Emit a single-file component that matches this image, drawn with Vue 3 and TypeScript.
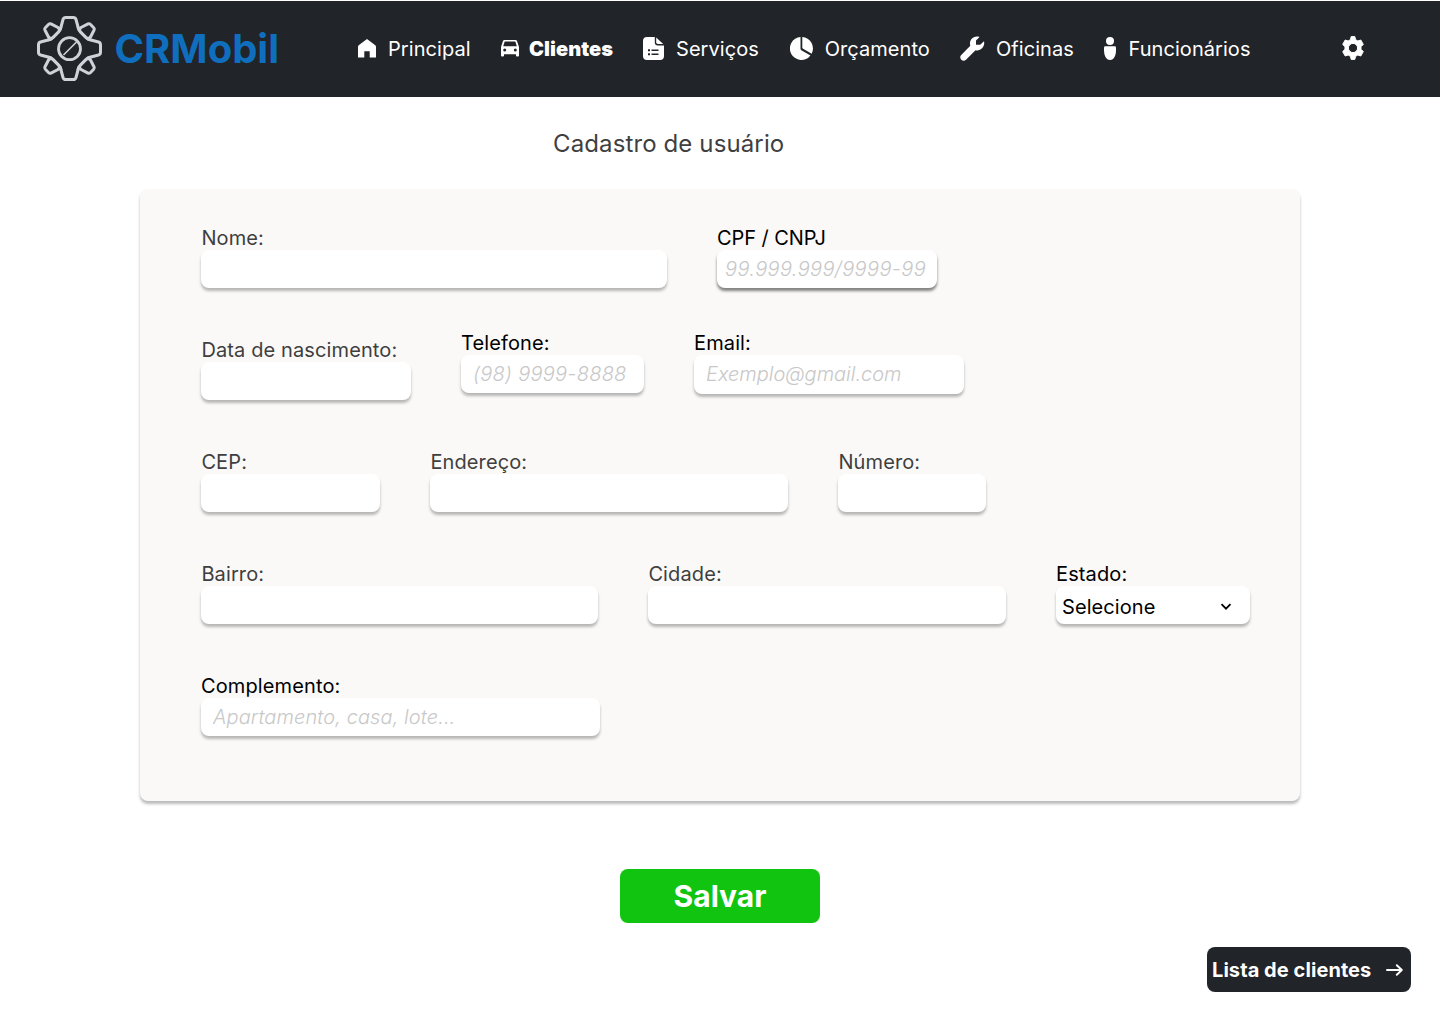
<script setup lang="ts">
interface Field {
  label: string
  width: number
  placeholder?: string
  indent?: number
  spacing?: number
  dark?: boolean
  strong?: boolean
  select?: boolean
  raised?: boolean
  tall?: boolean
}

const rows: Field[][] = [
  [
    { label: 'Nome:', width: 466 },
    { label: 'CPF / CNPJ', width: 220, placeholder: '99.999.999/9999-99', indent: 8, spacing: 0.38, dark: true, strong: true },
  ],
  [
    { label: 'Data de nascimento:', width: 210 },
    { label: 'Telefone:', width: 183, placeholder: '(98) 9999-8888', indent: 12, spacing: 0.28, dark: true, raised: true },
    { label: 'Email:', width: 270, placeholder: 'Exemplo@gmail.com', indent: 12, spacing: -0.03, dark: true, raised: true, tall: true },
  ],
  [
    { label: 'CEP:', width: 179 },
    { label: 'Endereço:', width: 358 },
    { label: 'Número:', width: 148 },
  ],
  [
    { label: 'Bairro:', width: 397 },
    { label: 'Cidade:', width: 358 },
    { label: 'Estado:', width: 194, dark: true, select: true },
  ],
  [{ label: 'Complemento:', width: 399, placeholder: 'Apartamento, casa, lote...', indent: 12, spacing: 0.09, dark: true }],
]
</script>

<template>
  <div class="page">
    <header class="bar">
      <svg class="logo" viewBox="0 0 65 65" width="65" height="65" fill="none" stroke="#cfd2d8" stroke-width="3" stroke-linejoin="round">
        <g v-for="a in [0, 90, 180, 270]" :key="a" :transform="`rotate(${a} 32.5 32.5)`">
          <path d="M11 24Q14 23.500 16 21.500L21.500 16Q23.500 14 24 11L26 3.500Q26.600 1.500 28.700 1.500H36.300Q38.400 1.500 39 3.500L41 11Q41.500 14 43.500 16L49 21.500Q51 23.500 54 24" />
          <path d="M42.300 13.500L44 11.500L51 7.900Q52.300 7.300 53.300 8.300L56.700 11.700Q57.700 12.700 57.100 14L53.500 21L51.500 22.700" />
        </g>
        <circle cx="32.500" cy="32.700" r="11" stroke-width="2.800" />
        <path d="M26.500 39L39.500 26" stroke-width="1.600" />
      </svg>
      <span class="brand">CRMobil</span>
      <nav class="nav">
        <a class="n1">
          <svg width="18" height="19" viewBox="0 0 18 19" fill="#fff"><path d="M9 0L17.300 6.300Q18 6.900 18 7.800V18.500H11.700V12.300H6.300V18.500H0V7.800Q0 6.900.7 6.300Z" /></svg>
          <span>Principal</span>
        </a>
        <a class="n2">
          <svg width="18" height="17" viewBox="0 0 18 17" fill="#fff"><path fill-rule="evenodd" d="M3.500 0H14.500Q15.600 0 16 1L18 7V15.500Q18 16.500 17 16.500H16Q15 16.500 15 15.500V14.300H3V15.500Q3 16.500 2 16.500H1Q0 16.500 0 15.500V7L2 1Q2.400 0 3.500 0ZM3.700 1.500L2.200 6.200H15.800L14.300 1.500ZM3.700 8.500A1.500 1.500 0 1 0 3.700 11.500A1.500 1.500 0 1 0 3.700 8.500ZM14.300 8.500A1.500 1.500 0 1 0 14.300 11.500A1.500 1.500 0 1 0 14.300 8.500Z" /></svg>
          <span>Clientes</span>
        </a>
        <a class="n3">
          <svg width="21" height="23" viewBox="0 0 21 23" fill="#fff"><path fill-rule="evenodd" d="M4 0H11.800V5.300Q11.800 8.500 15 8.500H21V19Q21 23 17 23H4Q0 23 0 19V4Q0 0 4 0ZM5 12.200V14.200H7V12.200ZM8.500 12.500V14H15.500V12.500ZM5 16.300V18.300H7V16.300ZM8.500 16.600V18.100H15.500V16.600Z" /><path d="M13.200.5L20.200 7H15Q13.200 7 13.200 5.200Z" /></svg>
          <span>Serviços</span>
        </a>
        <a class="n4">
          <svg width="23" height="23" viewBox="0 0 23 23" fill="#fff"><path d="M10.500 0A11.500 11.500 0 1 0 20.500 18.500L11.300 13.200Q10.500 12.700 10.500 11.800Z" /><path d="M12.300 0A11.500 11.500 0 0 1 21.700 16.700L13.100 11.700Q12.300 11.300 12.300 10.500Z" /></svg>
          <span>Orçamento</span>
        </a>
        <a class="n5">
          <svg width="25" height="25" viewBox="0 0 25 25" fill="#fff"><path d="M19.500.9L16 4.500V8.700H20.200L24 5.300C25.300 10.500 20.800 15.500 15.500 14.300L6 23.800C3 26.600-1.600 22.500 1 19.200L10.300 9.700C8.500 4 14-1.200 19.500.9Z" /></svg>
          <span>Oficinas</span>
        </a>
        <a class="n6">
          <svg width="12" height="23" viewBox="0 0 12 23" fill="#fff"><circle cx="6" cy="4" r="4" /><path d="M1.300 9.300H10.700Q12 9.300 12 10.600V13C12 18.500 10 23 6 23S0 18.500 0 13V10.600Q0 9.300 1.300 9.300Z" /></svg>
          <span>Funcionários</span>
        </a>
      </nav>
      <svg class="settings" width="22" height="24" viewBox="0 0 22 24" fill="#fff" stroke="#fff" stroke-linejoin="round"><path fill-rule="evenodd" d="M9.200.6H12.800L13.600 3.700L15.900 5L18.800 4L21.300 8.400L19 10.700V13.300L21.300 15.600L18.800 20L15.900 19L13.600 20.300L12.800 23.400H9.200L8.400 20.300L6.100 19L3.200 20L.7 15.600L3 13.300V10.700L.7 8.400L3.200 4L6.100 5L8.400 3.700ZM11 7.400A4.600 4.600 0 1 0 11 16.600A4.600 4.600 0 1 0 11 7.400Z" /></svg>
    </header>

    <h1 class="title">Cadastro de usuário</h1>

    <form class="panel" @submit.prevent>
      <div v-for="(row, i) in rows" :key="i" class="row">
        <label v-for="f in row" :key="f.label" class="field" :class="{ dark: f.dark, raised: f.raised }" :style="{ width: f.width + 'px' }">
          <span class="caption" :class="{ tight: f.strong }">{{ f.label }}</span>
          <span v-if="f.select" class="box select">
            Selecione
            <svg width="12" height="8" viewBox="0 0 12 8" fill="none" stroke="#000" stroke-width="1.800"><path d="M1.500 1.200L6 5.700L10.500 1.200" /></svg>
          </span>
          <input
            v-else
            class="box"
            :class="{ strong: f.strong, tall: f.tall }"
            type="text"
            :placeholder="f.placeholder"
            :style="{ paddingLeft: (f.indent ?? 8) + 'px', letterSpacing: (f.spacing ?? 0) + 'px' }"
          />
        </label>
      </div>
    </form>

    <button class="save" type="button">Salvar</button>
    <button class="list" type="button">
      <span>Lista de clientes</span>
      <svg width="17" height="12" viewBox="0 0 17 12" fill="none" stroke="#fff" stroke-width="1.900" stroke-linecap="round" stroke-linejoin="round"><path d="M1 6H15.500M10.800 1.200L15.800 6L10.800 10.800" /></svg>
    </button>
  </div>
</template>

<style>
body {
  margin: 0;
  background: #fff;
}
</style>

<style scoped>
.page {
  box-sizing: border-box;
  width: 1440px;
  height: 1024px;
  padding-top: 1px;
  display: flex;
  flex-direction: column;
  overflow: hidden;
  font-family: Inter, "Liberation Sans", sans-serif;
  font-size: 20px;
}
.bar {
  height: 96px;
  flex: none;
  box-sizing: border-box;
  padding-left: 37px;
  display: flex;
  align-items: center;
  background: #212429;
  color: #fff;
}
.logo {
  flex: none;
  margin-bottom: 2px;
}
.brand {
  width: 242.5px;
  margin-left: 12.5px;
  color: #106ebe;
  font-size: 40px;
  line-height: 48px;
  font-weight: 700;
}
.nav {
  display: flex;
  align-items: center;
  width: 985px;
  flex: none;
}
.nav a {
  display: flex;
  align-items: center;
  flex: none;
  line-height: 24px;
  letter-spacing: 0.06px;
}
.nav svg, .settings {
  flex: none;
  margin-bottom: 2px;
}
.n1 { width: 143px; gap: 12px; margin-left: 1px; }
.n2 { width: 142px; gap: 10px; font-weight: 900; }
.n3 { width: 146.5px; gap: 12px; }
.n4 { width: 170.5px; gap: 12.2px; }
.n5 { width: 144.3px; gap: 11px; }
.n6 { gap: 12.2px; }
.settings {
  display: block;
}
.title {
  margin: 32px 0 0 553px;
  flex: none;
  color: #3f3f3f;
  font-size: 24px;
  line-height: 29px;
  font-weight: 400;
  letter-spacing: 0.12px;
}
.panel {
  box-sizing: border-box;
  width: 1160px;
  height: 612px;
  flex: none;
  margin: 31px 0 0 140px;
  padding: 37px 0 0 61px;
  display: flex;
  flex-direction: column;
  gap: 50px;
  border-radius: 8px;
  background: #faf9f8;
  box-shadow: 0 3px 3px rgba(0, 0, 0, 0.27);
}
.row {
  height: 62px;
  display: flex;
  align-items: flex-start;
  gap: 50px;
}
.row:last-child {
  margin-top: 0.4px;
}
.field {
  display: flex;
  flex-direction: column;
  color: #3f3f3f;
}
.raised {
  margin-top: -7px;
}
.caption {
  height: 24px;
  padding-left: 0.4px;
  line-height: 24px;
  white-space: nowrap;
  letter-spacing: 0.12px;
}
.dark {
  color: #000;
}
.dark .caption {
  padding-left: 0;
}
.tight {
  letter-spacing: -0.07px;
}
.box {
  box-sizing: border-box;
  width: 100%;
  height: 38px;
  padding: 0;
  border: 0;
  border-radius: 8px;
  outline: 0;
  background: #fff;
  box-shadow: 0 3px 3px rgba(0, 0, 0, 0.27);
  font: 400 20px/24px Inter, "Liberation Sans", sans-serif;
}
.box::placeholder {
  color: #c8c8c8;
  opacity: 1;
  font-style: italic;
  font-weight: 300;
}
.strong {
  box-shadow: 0 3px 3px rgba(0, 0, 0, 0.48);
}
.tall {
  height: 39px;
  padding-bottom: 1px;
}
.select {
  display: flex;
  align-items: center;
  justify-content: space-between;
  padding: 3px 18px 0 6px;
  letter-spacing: 0.08px;
}
.save {
  width: 200px;
  height: 54px;
  flex: none;
  margin: 68px 0 0 620px;
  padding: 0;
  border: 0;
  border-radius: 8px;
  background: #10c410;
  color: #fff;
  font: 700 30px/36px Inter, "Liberation Sans", sans-serif;
}
.list {
  width: 204px;
  height: 45px;
  flex: none;
  margin: 24px 0 0 1207px;
  padding: 0 8.5px 0 5px;
  display: flex;
  align-items: center;
  justify-content: space-between;
  border: 0;
  border-radius: 8px;
  background: #212429;
  color: #fff;
  font: 700 20px/24px Inter, "Liberation Sans", sans-serif;
  letter-spacing: 0.07px;
}
</style>
